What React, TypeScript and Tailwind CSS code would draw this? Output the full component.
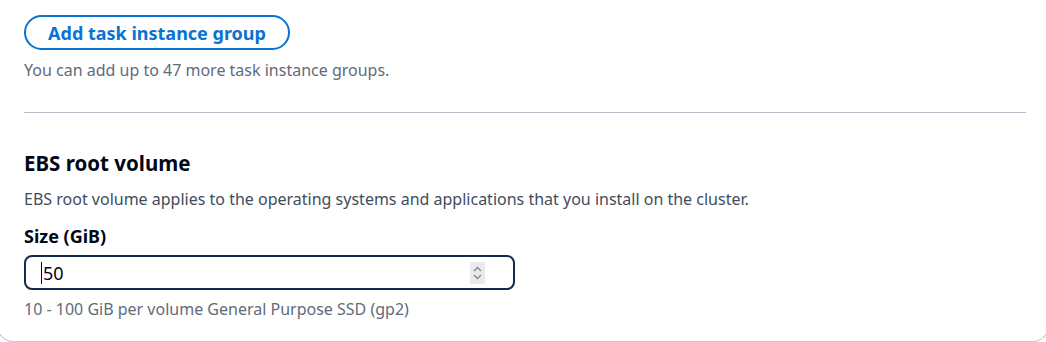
import React from "react";

export default function App() {
  return (
    <div className="w-[1046px] h-[342px] overflow-hidden bg-white font-['Noto_Sans','Open_Sans',sans-serif]">
      <div className="ml-[-3px] w-[1052px] h-[342px] border border-t-0 border-[#c6c6cd] rounded-b-2xl pl-[26px] pr-[22px] pt-[15px]">
        <button className="w-[266px] h-[35px] rounded-full border-2 border-[#0972d3] text-[#0972d3] font-bold text-[18px] leading-[22px] flex items-center justify-center">
          Add task instance group
        </button>
        <p className="mt-[9px] text-[16px] leading-[22px] text-[#5f6b7a]">You can add up to 47 more task instance groups.</p>
        <div className="mt-[31px] border-t border-[#b6bec9]" />
        <h2 className="mt-[37px] text-[20.5px] leading-[26px] font-bold text-[#000716]">EBS root volume</h2>
        <p className="mt-[12px] text-[16px] leading-[22px] text-[#414d5c]">
          EBS root volume applies to the operating systems and applications that you install on the cluster.
        </p>
        <div className="mt-[14px] text-[18px] leading-[24px] font-bold text-[#000716]">Size (GiB)</div>
        <div className="mt-[7px] w-[491px] h-[35px] rounded-lg border-2 border-[#0f2b4d] flex items-center pl-[15px] pr-[28px]">
          <span className="w-px h-[22px] bg-[#000716]" />
          <span className="ml-px text-[18px] leading-[22px] text-[#000716] flex-1">50</span>
          <div className="w-[15px] h-[22px] bg-[#e9ebed] flex flex-col items-center justify-center">
            <svg width="9" height="18" viewBox="0 0 9 18" fill="none" stroke="#7d8998" strokeWidth="1.3">
              <path d="M1 7 L4.5 3.5 L8 7" />
              <path d="M1 11 L4.5 14.5 L8 11" />
            </svg>
          </div>
        </div>
        <p className="mt-[8px] text-[16px] leading-[22px] text-[#5f6b7a]">10 - 100 GiB per volume General Purpose SSD (gp2)</p>
      </div>
    </div>
  );
}
